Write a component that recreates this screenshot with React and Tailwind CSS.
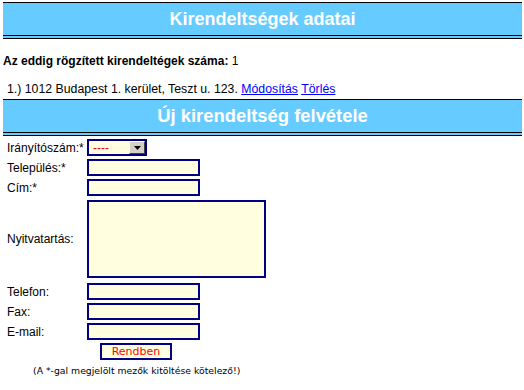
function Header({ children }) {
  return (
    <div className="border-y border-black bg-[#66ccff]">
      <div className="h-[32px] flex items-center justify-center text-white font-bold text-[18px] leading-none">
        {children}
      </div>
      <div className="h-px bg-black"></div>
      <div className="h-[2px]"></div>
    </div>
  );
}

function Row({ label, children, className = "" }) {
  return (
    <div className={"flex items-center " + className}>
      <div className="w-[84px] pl-[4px] text-[12px] leading-[14px]">{label}</div>
      {children}
    </div>
  );
}

function Input({ className = "" }) {
  return <div className={"h-[17px] w-[113px] border-2 border-[#000080] bg-[#ffffe0] " + className}></div>;
}

export default function App() {
  return (
    <div className="w-[524px] h-[390px] bg-white text-black overflow-hidden pt-[2px] pl-[3px] pr-[2px] font-['Liberation_Sans',Arial,sans-serif]">
      <Header>Kirendeltségek adatai</Header>
      <div className="mt-[15px] text-[12px] leading-[14px]">
        <span className="font-bold">Az eddig rögzített kirendeltégek száma:</span> 1
      </div>
      <div className="mt-[14px] pl-[4px] text-[12.3px] leading-[14px]">
        1.) 1012 Budapest 1. kerület, Teszt u. 123.{" "}
        <a className="text-[#0000ff] underline">Módosítás</a>{" "}
        <a className="text-[#0000ff] underline">Törlés</a>
      </div>
      <div className="mt-[3px]">
        <Header>
          <span className="text-[18.4px]">Új kirendeltség felvétele</span>
        </Header>
      </div>
      <div className="flex flex-col">
        <Row label="Irányítószám:*" className="mt-[3px] h-[17px]">
          <div className="w-[60px] h-[17px] border-2 border-[#000080] bg-[#ffffe0] flex items-center">
            <span className="flex-1 pl-[4px] text-[#ff0000] text-[12px] leading-none">----</span>
            <div className="w-[16px] h-[13px] bg-[#d4d0c8] border border-t-white border-l-white border-r-[#404040] border-b-[#404040] flex items-center justify-center">
              <svg width="7" height="4" viewBox="0 0 7 4">
                <path d="M0 0H7L3.5 4Z" fill="#000" />
              </svg>
            </div>
          </div>
        </Row>
        <Row label="Település:*" className="mt-[3px] h-[17px]">
          <Input />
        </Row>
        <Row label="Cím:*" className="mt-[3px] h-[17px]">
          <Input />
        </Row>
        <Row label="Nyitvatartás:" className="mt-[4px] h-[78px]">
          <div className="h-[78px] w-[179px] border-2 border-[#000080] bg-[#ffffe0]"></div>
        </Row>
        <Row label="Telefon:" className="mt-[5px] h-[17px]">
          <Input />
        </Row>
        <Row label="Fax:" className="mt-[3px] h-[17px]">
          <Input />
        </Row>
        <Row label="E-mail:" className="mt-[3px] h-[17px]">
          <Input />
        </Row>
        <div className="mt-[3px] pl-[97px]">
          <div className="w-[72px] h-[17px] border-2 border-[#000080] bg-[#ffffe0] flex items-center justify-center text-[#ff0000] text-[11px] leading-none font-['DejaVu_Sans',Verdana,sans-serif]">
            Rendben
          </div>
        </div>
        <div className="mt-[5px] pl-[30px] text-[9.3px] leading-[12px] font-['DejaVu_Sans',Verdana,sans-serif]">
          (A *-gal megjelölt mezők kitöltése kötelező!)
        </div>
      </div>
    </div>
  );
}
